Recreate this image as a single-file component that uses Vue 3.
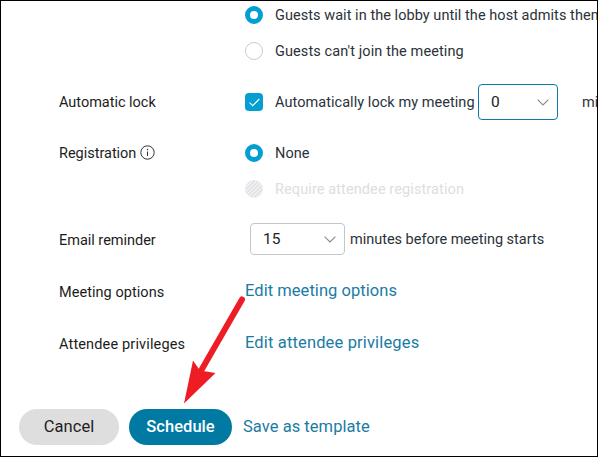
<script setup>
import { ref } from 'vue'

const lobby = ref('wait')
const autoLock = ref(true)
const registration = ref('none')

const lobbyOptions = [
  { value: 'wait', label: 'Guests wait in the lobby until the host admits them' },
  { value: 'deny', label: "Guests can't join the meeting", cls: 'wide' }
]
</script>

<template>
  <div class="page">
    <div class="form">
      <div class="row first">
        <div class="row-label"></div>
        <div class="row-content">
          <div
            v-for="option in lobbyOptions"
            :key="option.value"
            class="line"
            @click="lobby = option.value"
          >
            <span class="radio" :class="{ checked: lobby === option.value }"></span>
            <span class="text" :class="option.cls">{{ option.label }}</span>
          </div>
        </div>
      </div>

      <div class="row lock">
        <div class="row-label"><span class="tight">Automatic lock</span></div>
        <div class="row-content">
          <div class="line">
            <span class="checkbox" :class="{ checked: autoLock }" @click="autoLock = !autoLock">
              <svg v-if="autoLock" width="18" height="18" viewBox="0 0 18 18">
                <path d="M4.5 9.7 7.7 12.7 14.3 6" fill="none" stroke="#fff" stroke-width="1.1" />
              </svg>
            </span>
            <span class="text lock-text">Automatically lock my meeting</span>
            <div class="select active">
              <span>0</span>
              <svg width="12" height="7" viewBox="0 0 12 7">
                <path d="M.6.6 6 6 11.4.6" fill="none" stroke="#888" stroke-width="1.1" />
              </svg>
            </div>
            <span class="text unit">minutes</span>
          </div>
        </div>
      </div>

      <div class="row registration">
        <div class="row-label">
          <span class="tight">Registration</span>
          <svg class="info" width="15" height="15" viewBox="0 0 15 15">
            <circle cx="7.5" cy="7.5" r="6.7" fill="none" stroke="#333" stroke-width="1" />
            <path d="M7.5 6.5v4.5" stroke="#333" stroke-width="1" />
            <circle cx="7.5" cy="4.5" r=".75" fill="#333" />
          </svg>
        </div>
        <div class="row-content">
          <div class="line" @click="registration = 'none'">
            <span class="radio" :class="{ checked: registration === 'none' }"></span>
            <span class="text">None</span>
          </div>
          <div class="line disabled">
            <span class="radio"></span>
            <span class="text wide">Require attendee registration</span>
          </div>
        </div>
      </div>

      <div class="row reminder">
        <div class="row-label"><span class="tight">Email reminder</span></div>
        <div class="row-content">
          <div class="line">
            <div class="select small">
              <span>15</span>
              <svg width="12" height="7" viewBox="0 0 12 7">
                <path d="M.6.6 6 6 11.4.6" fill="none" stroke="#888" stroke-width="1.1" />
              </svg>
            </div>
            <span class="text tight">minutes before meeting starts</span>
          </div>
        </div>
      </div>

      <div class="row options">
        <div class="row-label"><span>Meeting options</span></div>
        <div class="row-content">
          <div class="line"><a class="link">Edit meeting options</a></div>
        </div>
      </div>

      <div class="row options">
        <div class="row-label"><span class="wider">Attendee privileges</span></div>
        <div class="row-content">
          <div class="line"><a class="link wider">Edit attendee privileges</a></div>
        </div>
      </div>
    </div>

    <div class="footer">
      <button class="btn cancel">Cancel</button>
      <button class="btn schedule">Schedule</button>
      <a class="link save">Save as template</a>
    </div>

    <!-- Arrow pointing at the Schedule button -->
    <svg class="arrow" width="70" height="115" viewBox="0 0 70 115">
      <path d="M62 9.5 22 79" stroke="#ee1c25" stroke-width="6" stroke-linecap="round" />
      <path d="M4 113.5 13 70.500 20 80.500 35.500 83Z" fill="#ee1c25" />
    </svg>
  </div>
</template>

<style>
body {
  margin: 0;
  overflow: hidden;
}
</style>

<style scoped>
.page {
  position: relative;
  box-sizing: border-box;
  width: 598px;
  height: 457px;
  border: 1px solid #000;
  background: #fff;
  overflow: hidden;
  font-family: Roboto, "Liberation Sans", sans-serif;
  font-size: 14.5px;
  letter-spacing: 0.05px;
  color: #2a323a;
}

.form {
  padding-left: 58px;
}

.row {
  display: flex;
}

.first {
  margin-top: -4px;
}

.lock,
.registration {
  margin-top: 15px;
}

.reminder {
  height: 36px;
  margin-top: 14px;
}

.options {
  height: 36px;
  margin-top: 16px;
}

.row-label {
  display: flex;
  align-items: center;
  flex: 0 0 186px;
  height: 36px;
  color: #1c1c1c;
  white-space: nowrap;
}

.reminder .row-label,
.options .row-label {
  height: 38px;
}

.info {
  margin: 0 0 1px 4px;
}

.row-content {
  flex: 1;
  min-width: 0;
}

.line {
  display: flex;
  align-items: center;
  height: 36px;
  white-space: nowrap;
}

.options .line {
  height: 34px;
}

.radio,
.checkbox {
  box-sizing: border-box;
  flex: none;
  width: 18px;
  height: 18px;
  margin-right: 12px;
}

.radio {
  border: 1px solid #ccc;
  border-radius: 50%;
}

.radio.checked {
  border: 5px solid #049fd2;
}

.checkbox {
  border: 1px solid #ccc;
  border-radius: 4px;
}

.checkbox.checked {
  border: none;
  background: #049fd2;
}

.checkbox svg {
  display: block;
}

.disabled {
  color: #dcdedf;
}

.disabled .radio {
  border-color: #ebecee;
  background: repeating-linear-gradient(135deg, #dfe1e4 0 1px, #f0f1f3 1px 2.8px);
}

.text {
  flex: none;
}

.tight {
  letter-spacing: -0.02px;
}

.wide {
  letter-spacing: 0.1px;
}

.wider {
  letter-spacing: 0.15px;
}

.lock-text {
  width: 203px;
}

.select {
  display: flex;
  align-items: center;
  justify-content: space-between;
  flex: none;
  box-sizing: border-box;
  width: 80px;
  height: 36px;
  padding: 0 8px 0 12px;
  border: 1px solid #c4c7c9;
  border-radius: 4px;
  font-size: 15.5px;
  color: #222;
}

.select.active {
  border-color: #0b7ba5;
}

.select.small {
  width: 95px;
  height: 32px;
  margin: 0 5px;
}

.unit {
  margin-left: 24px;
}

.link {
  font-size: 16.5px;
  color: #1a7ba3;
  cursor: pointer;
}

.footer {
  display: flex;
  align-items: center;
  margin-top: 48px;
  padding-left: 18px;
}

.btn {
  height: 36px;
  padding: 0 0 2px;
  border: none;
  border-radius: 18px;
  font-family: inherit;
  font-size: 16.5px;
  letter-spacing: inherit;
  cursor: pointer;
}

.cancel {
  width: 100px;
  margin-right: 10px;
  background: #dedede;
  color: #222;
}

.schedule {
  width: 103px;
  margin-right: 11px;
  background: #007aa3;
  color: #fff;
  font-weight: 500;
}

.save {
  padding-bottom: 2px;
}

.arrow {
  position: absolute;
  left: 179px;
  top: 289px;
  pointer-events: none;
}
</style>
